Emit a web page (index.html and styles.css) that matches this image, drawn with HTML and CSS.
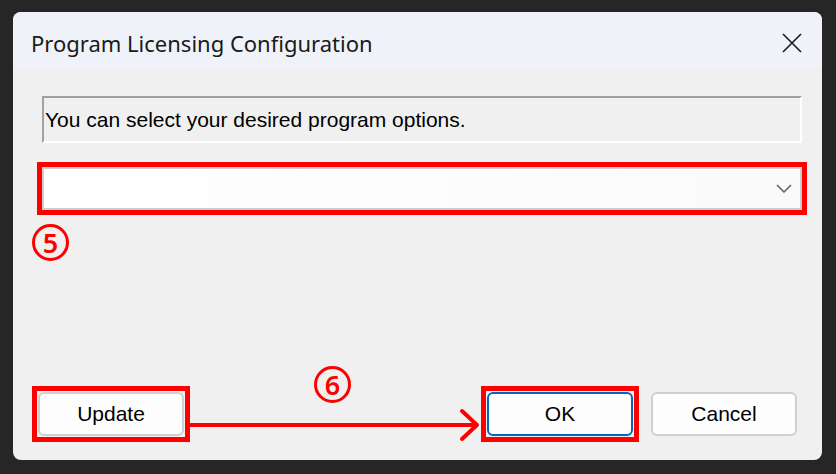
FILE: index.html
```html
<!DOCTYPE html>
<html lang="en">
<head>
  <meta charset="UTF-8" />
  <meta name="viewport" content="width=device-width, initial-scale=1.0"/>
  <title>Program Licensing Configuration</title>
  <link rel="stylesheet" href="styles.css">
</head>
<body>
  <div id="dialog">
    <div id="title-bar">
      <div class="title">Program Licensing Configuration</div>
      <svg class="close" width="20" height="20" viewBox="0 0 20 20">
        <path d="M1 1 L19 19 M19 1 L1 19" stroke="#1a1a1a" stroke-width="1.6" fill="none"/>
      </svg>
    </div>

    <div id="content">
      <div class="info-box">You can select your desired program options.</div>

      <div class="mark combo-mark">
        <div class="combo">
          <svg width="16" height="9" viewBox="0 0 16 9">
            <polyline points="1,1 8,8 15,1" stroke="#606060" stroke-width="1.5" fill="none"/>
          </svg>
        </div>
      </div>

      <div class="button-row">
        <div class="mark btn-mark"><button class="btn">Update</button></div>
        <div class="spacer"></div>
        <div class="mark btn-mark"><button class="btn default">OK</button></div>
        <button class="btn">Cancel</button>
      </div>
    </div>

    <div class="badge badge-5">5</div>
    <div class="badge badge-6">6</div>

    <svg class="arrow" width="292" height="46" viewBox="0 0 292 46">
      <line x1="0" y1="28" x2="287" y2="28" stroke="#ff0000" stroke-width="4"/>
      <polyline points="272,14 287,28 272,42" stroke="#ff0000" stroke-width="4" stroke-linecap="round" stroke-linejoin="round" fill="none"/>
    </svg>
  </div>
</body>
</html>
```

FILE: styles.css
```css
* {
  margin: 0;
  padding: 0;
  box-sizing: border-box;
}

body {
  background: #262626;
  overflow: hidden;
}

#dialog {
  position: relative;
  width: 809px;
  height: 448px;
  margin: 12px 0 0 13px;
  background: #f0f0f0;
  border-radius: 8px;
  overflow: hidden;
  display: flex;
  flex-direction: column;
}

#title-bar {
  height: 56px;
  padding: 6px 20px 0 18px;
  background: #eff3f9;
  display: flex;
  align-items: center;
  justify-content: space-between;
}

.title {
  font-family: "Noto Sans", sans-serif;
  font-size: 22px;
  color: #1a1a1a;
}

#content {
  flex: 1;
  display: flex;
  flex-direction: column;
  padding: 28px 20px 24px 29px;
}

.info-box {
  height: 47px;
  padding: 10px 0 0 1px;
  border: 2px solid;
  border-color: #a0a0a0 #ffffff #ffffff #a0a0a0;
  font-family: "Liberation Sans", Arial, sans-serif;
  font-size: 21px;
  color: #000;
}

/* red annotation frames */
.mark {
  border: 5px solid #ff0000;
}

.combo-mark {
  margin: 19px -5px 0 -5px;
}

.btn-mark {
  padding: 1px;
}

.combo {
  height: 43px;
  border: 2px solid #cdcdcd;
  background: linear-gradient(to right, #ffffff, #fafafa);
  display: flex;
  align-items: center;
  justify-content: flex-end;
  padding-right: 8px;
}

.button-row {
  margin: auto 5px -6px -10px;
  display: flex;
  align-items: center;
  gap: 12px;
}

.spacer {
  flex: 1;
}

.btn {
  display: block;
  width: 146px;
  height: 44px;
  border: 2px solid #d0d0d0;
  border-radius: 6px;
  background: #fdfdfd;
  font-family: "Liberation Sans", Arial, sans-serif;
  font-size: 21px;
  color: #000;
}

.btn.default {
  border-color: #0067c0;
}

.badge {
  position: absolute;
  width: 37px;
  height: 37px;
  border: 3.5px solid #ff0000;
  border-radius: 50%;
  color: #ff0000;
  font-family: "Noto Sans", sans-serif;
  font-weight: 600;
  font-size: 27px;
  line-height: 1;
  display: flex;
  align-items: center;
  justify-content: center;
}

.badge-5 {
  left: 19px;
  top: 212px;
}

.badge-6 {
  left: 301px;
  top: 354px;
}

.arrow {
  position: absolute;
  left: 177px;
  top: 385px;
}
```
